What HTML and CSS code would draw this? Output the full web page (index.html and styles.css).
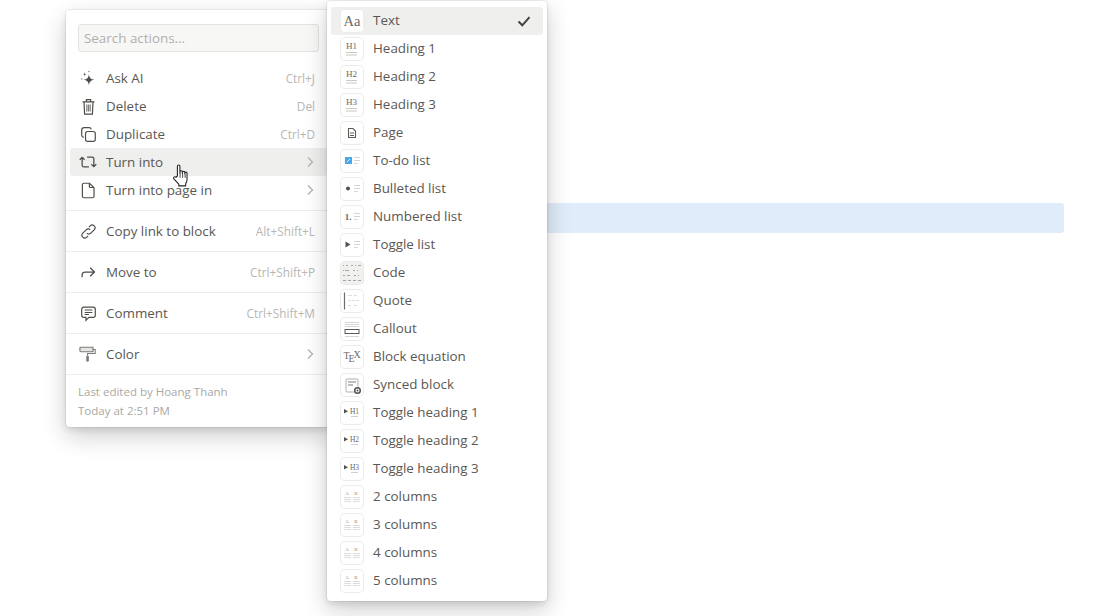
FILE: index.html
```html
<!DOCTYPE html>
<html lang="en">
<head>
<meta charset="utf-8">
<title>Block menu</title>
<link rel="stylesheet" href="styles.css">
</head>
<body>
<svg class="defs" width="0" height="0">
  <symbol id="chev" viewBox="0 0 10 12"><path d="M3 1.500 7.500 6 3 10.500" fill="none" stroke="#b4b3b0" stroke-width="1.300"/></symbol>
  <symbol id="lines" viewBox="0 0 24 24"><path d="M14 8.500h6M14 11.500h6M14 14.500h4" fill="none" stroke="#d6d5d3" stroke-width="1"/></symbol>
  <symbol id="collines" viewBox="0 0 24 24"><path d="M4 12.500h7M4 14.500h7M4 16.500h7M13 12.500h7M13 14.500h7M13 16.500h7" fill="none" stroke="#dedddb" stroke-width="1"/></symbol>
  <symbol id="hlines" viewBox="0 0 24 24"><path d="M6 15.500h11M6 18h11" fill="none" stroke="#c9c8c6"/></symbol>
  <symbol id="tri" viewBox="0 0 24 24"><path d="M4 8v4.500l4-2.200z" fill="#55534e"/><path d="M11 15.500h7" fill="none" stroke="#cfcfcd"/></symbol>
</svg>
<main class="page">
  <div class="selected-block"></div>
</main>

<section class="menu menu-actions">
  <div class="search-wrap"><div class="search">Search actions...</div></div>
  <div class="group group-first">
    <div class="row">
      <svg class="act-ic" viewBox="0 0 20 20"><path d="M10.500 5c.6 4.200 2 5.800 6.500 6.500-4.500.7-5.900 2.300-6.500 6.500-.6-4.200-2-5.800-6.500-6.500 4.500-.7 5.900-2.300 6.500-6.500z" fill="#4f4d48"/><path d="M5.500 2.500c.3 1.700.8 2.200 2.500 2.500-1.700.3-2.200.8-2.500 2.500C5.200 5.800 4.700 5.300 3 5c1.700-.3 2.200-.8 2.500-2.500z" fill="#6f6e69"/><circle cx="10.500" cy="1.800" r=".9" fill="#8a8986"/><circle cx="2" cy="10.500" r=".9" fill="#8a8986"/></svg>
      <span class="label">Ask AI</span><span class="hint">Ctrl+J</span>
    </div>
    <div class="row">
      <svg class="act-ic" viewBox="0 0 20 20" fill="none" stroke="#4f4d48" stroke-width="1.400"><path d="M3 4.500h14M7.500 4.500V2h5v2.500M4.700 4.500l.7 14.500h9.200l.7-14.500"/><path d="M8 7.500v8.500M10 7.500v8.500M12 7.500v8.500" stroke="#7d7c78"/></svg>
      <span class="label">Delete</span><span class="hint">Del</span>
    </div>
    <div class="row">
      <svg class="act-ic" viewBox="0 0 20 20" fill="none" stroke="#4f4d48" stroke-width="1.400"><rect x="6.500" y="6.500" width="11.500" height="11.500" rx="2.500"/><path d="M4.500 13.300C3.300 13 2 12 2 10.800V5c0-1.700 1.300-3 3-3h5.800c1.200 0 2.200.8 2.500 2"/></svg>
      <span class="label">Duplicate</span><span class="hint">Ctrl+D</span>
    </div>
    <div class="row row-active">
      <svg class="act-ic act-wide" viewBox="0 0 20 20" fill="none" stroke="#4f4d48" stroke-width="1.400"><path d="M.8 7.500 3.500 4.800l2.700 2.700M3.500 5v8.500a2 2 0 0 0 2 2H11M19.200 12.500l-2.700 2.700-2.700-2.700M16.500 15V6.500a2 2 0 0 0-2-2H9"/></svg>
      <span class="label">Turn into</span><svg class="chev"><use href="#chev"/></svg>
    </div>
    <div class="row">
      <svg class="act-ic" viewBox="0 0 20 20" fill="none" stroke="#4f4d48" stroke-width="1.400"><path d="M4.500 1.500h6.700l5.300 5.300v10a1.700 1.700 0 0 1-1.700 1.700H4.500a1.700 1.700 0 0 1-1.700-1.700V3.200a1.700 1.700 0 0 1 1.700-1.700z"/><path d="M11 1.500v3.500a1.500 1.500 0 0 0 1.500 1.500h4"/></svg>
      <span class="label">Turn into page in</span><svg class="chev"><use href="#chev"/></svg>
    </div>
  </div>
  <div class="group">
    <div class="row">
      <svg class="act-ic" viewBox="0 0 20 20" fill="none" stroke="#4f4d48" stroke-width="1.400"><path d="M8 12a3.300 3.300 0 0 0 4.700 0l4-4a3.300 3.300 0 0 0-4.700-4.700l-1.500 1.500"/><path d="M12 8a3.300 3.300 0 0 0-4.700 0l-4 4A3.300 3.300 0 0 0 8 16.700l1.500-1.500"/></svg>
      <span class="label">Copy link to block</span><span class="hint">Alt+Shift+L</span>
    </div>
  </div>
  <div class="group">
    <div class="row">
      <svg class="act-ic" viewBox="0 0 20 20" fill="none" stroke="#4f4d48" stroke-width="1.500"><path d="M2.500 15.500V13a3.500 3.500 0 0 1 3.500-3.500h11M12 4.500l5 5-5 5"/></svg>
      <span class="label">Move to</span><span class="hint">Ctrl+Shift+P</span>
    </div>
  </div>
  <div class="group">
    <div class="row">
      <svg class="act-ic" viewBox="0 0 20 20" fill="none" stroke="#4f4d48" stroke-width="1.400"><path d="M4.500 2.500h11A2.500 2.500 0 0 1 18 5v7a2.500 2.500 0 0 1-2.500 2.500h-5L7 18v-3.500H4.500A2.500 2.500 0 0 1 2 12V5a2.500 2.500 0 0 1 2.500-2.500z"/><path d="M5.500 6h9M5.500 8.700h9M5.500 11.300h5" stroke-width="1.200"/></svg>
      <span class="label">Comment</span><span class="hint">Ctrl+Shift+M</span>
    </div>
  </div>
  <div class="group">
    <div class="row">
      <svg class="act-ic act-wide" viewBox="0 0 20 20" fill="none"><path d="M2 2.500h13.500v5H2a1 1 0 0 1-1-1v-3a1 1 0 0 1 1-1z" fill="#e6e5e3" stroke="#7d7c78" stroke-width="1.300"/><path d="M15.500 5h2.500v4.500H9.500V12" stroke="#7d7c78" stroke-width="1.200"/><rect x="8" y="12" width="3" height="6.500" rx="1.200" fill="#7d7c78"/></svg>
      <span class="label">Color</span><svg class="chev"><use href="#chev"/></svg>
    </div>
  </div>
  <footer class="meta">
    <div>Last edited by Hoang Thanh</div>
    <div>Today at 2:51 PM</div>
  </footer>
</section>

<section class="menu menu-types">
  <div class="trow trow-active">
    <svg class="tic" viewBox="0 0 24 24"><text x="12" y="16.500" class="ic-aa">Aa</text></svg>
    <span class="label">Text</span>
    <svg class="check" viewBox="0 0 14 14"><path d="M1.500 7.500 5.300 11.300 12.500 3.200" fill="none" stroke="#44423e" stroke-width="2"/></svg>
  </div>
  <div class="trow"><svg class="tic" viewBox="0 0 24 24"><text x="11.500" y="12" class="ic-h">H1</text><use href="#hlines"/></svg><span class="label">Heading 1</span></div>
  <div class="trow"><svg class="tic" viewBox="0 0 24 24"><text x="11.500" y="12" class="ic-h">H2</text><use href="#hlines"/></svg><span class="label">Heading 2</span></div>
  <div class="trow"><svg class="tic" viewBox="0 0 24 24"><text x="11.500" y="12" class="ic-h">H3</text><use href="#hlines"/></svg><span class="label">Heading 3</span></div>
  <div class="trow"><svg class="tic" viewBox="0 0 24 24"><path d="M8.500 7.500h4.500l2.500 2.500v6.500h-7z" fill="none" stroke="#5c5b56" stroke-width="1.100"/><path d="M10 12h4M10 14.500h4" stroke="#5c5b56"/></svg><span class="label">Page</span></div>
  <div class="trow"><svg class="tic" viewBox="0 0 24 24"><rect x="5" y="8" width="7" height="7" fill="#4aa8e8"/><path d="M7 13l3-3" stroke="#fff" stroke-width=".8"/><use href="#lines"/></svg><span class="label">To-do list</span></div>
  <div class="trow"><svg class="tic" viewBox="0 0 24 24"><circle cx="8" cy="11.500" r="2" fill="#55534e"/><use href="#lines"/></svg><span class="label">Bulleted list</span></div>
  <div class="trow"><svg class="tic" viewBox="0 0 24 24"><text x="8" y="15" class="ic-num">1.</text><use href="#lines"/></svg><span class="label">Numbered list</span></div>
  <div class="trow"><svg class="tic" viewBox="0 0 24 24"><path d="M5.500 8.500v6l5-3z" fill="#55534e"/><use href="#lines"/></svg><span class="label">Toggle list</span></div>
  <div class="trow"><svg class="tic tic-code" viewBox="0 0 24 24"><path d="M3 4.500h1M6 4.500h2M11 4.500h2M15 4.500h1M18 4.500h3M3 9.500h1M5 9.500h4M13 9.500h2M17 9.500h1M3 14.500h2M7 14.500h3M14 14.500h2M18 14.500h1M3 19.500h3M8 19.500h3M13 19.500h3M18 19.500h3" fill="none" stroke="#a8a7a4"/></svg><span class="label">Code</span></div>
  <div class="trow"><svg class="tic" viewBox="0 0 24 24"><path d="M4.500 3.500v17" stroke="#6f6e69" stroke-width="1.200"/><path d="M8 6.500h4M14 6.500h3M8 11.500h3M12 11.500h3M16 11.500h3M8 16.500h3M14 16.500h3" fill="none" stroke="#dedddb"/></svg><span class="label">Quote</span></div>
  <div class="trow"><svg class="tic" viewBox="0 0 24 24"><path d="M5 5.500h14M5 7.500h14M5 9.500h14M5 19.500h14" stroke="#d6d5d3"/><rect x="5" y="12.500" width="14" height="4" fill="none" stroke="#5c5b56"/></svg><span class="label">Callout</span></div>
  <div class="trow"><svg class="tic" viewBox="0 0 24 24"><text x="6.500" y="14" class="ic-tex">T</text><text x="11.500" y="17" class="ic-tex">E</text><text x="17" y="13" class="ic-tex">X</text></svg><span class="label">Block equation</span></div>
  <div class="trow"><svg class="tic" viewBox="0 0 24 24"><path d="M18 13.500V7a1 1 0 0 0-1-1H7a1 1 0 0 0-1 1v11a1 1 0 0 0 1 1h7" fill="none" stroke="#b0afac"/><path d="M8 9h8M8 12h5" stroke="#7d7c78" stroke-width="1.200"/><circle cx="17.500" cy="17.500" r="2.800" fill="#fff" stroke="#55534e" stroke-width="1.500"/><circle cx="17.500" cy="17.500" r="1" fill="#55534e"/></svg><span class="label">Synced block</span></div>
  <div class="trow"><svg class="tic" viewBox="0 0 24 24"><use href="#tri"/><text x="14.500" y="12.500" class="ic-hs">H1</text></svg><span class="label">Toggle heading 1</span></div>
  <div class="trow"><svg class="tic" viewBox="0 0 24 24"><use href="#tri"/><text x="14.500" y="12.500" class="ic-hs">H2</text></svg><span class="label">Toggle heading 2</span></div>
  <div class="trow"><svg class="tic" viewBox="0 0 24 24"><use href="#tri"/><text x="14.500" y="12.500" class="ic-hs">H3</text></svg><span class="label">Toggle heading 3</span></div>
  <div class="trow"><svg class="tic" viewBox="0 0 24 24"><text x="7" y="9.500" class="ic-tiny">A</text><text x="16" y="9.500" class="ic-tiny">B</text><use href="#collines"/></svg><span class="label">2 columns</span></div>
  <div class="trow"><svg class="tic" viewBox="0 0 24 24"><text x="7" y="9.500" class="ic-tiny">A</text><text x="16" y="9.500" class="ic-tiny">B</text><use href="#collines"/></svg><span class="label">3 columns</span></div>
  <div class="trow"><svg class="tic" viewBox="0 0 24 24"><text x="7" y="9.500" class="ic-tiny">A</text><text x="16" y="9.500" class="ic-tiny">B</text><use href="#collines"/></svg><span class="label">4 columns</span></div>
  <div class="trow"><svg class="tic" viewBox="0 0 24 24"><text x="7" y="9.500" class="ic-tiny">A</text><text x="16" y="9.500" class="ic-tiny">B</text><use href="#collines"/></svg><span class="label">5 columns</span></div>
</section>

<svg class="hand" viewBox="0 0 20 28"><path d="M6 14V3.200a1.400 1.400 0 0 1 2.800 0V11l.1-1.500a1.300 1.300 0 0 1 2.600 0v1.800l.1-1.200a1.300 1.300 0 0 1 2.600 0v1.600l.1-.8a1.200 1.200 0 0 1 2.400 0V18c0 2-.8 3.500-1.500 4.500v2.500H7.500v-2L2.300 17.500c-1.600-1.800.6-3.600 2.200-2.100z" fill="#fff" stroke="#222" stroke-width="1.200" stroke-linejoin="round"/><path d="M9 11v5M11.800 11v5M14.600 12v4" stroke="#222" stroke-width=".9" fill="none"/></svg>
</body>
</html>
```
FILE: styles.css
```css
* { box-sizing: border-box; }
html, body { margin: 0; height: 100%; background: #fff; overflow: hidden; }
body {
  font-family: "Open Sans", "Noto Sans", sans-serif;
  font-size: 13.4px;
  color: #5a5853;
  position: relative;
}
.defs { position: absolute; }
.page { padding: 203px 37px 0 340px; }
.selected-block { height: 30px; background: #e0ecf9; border-radius: 3px; }

.menu {
  position: absolute;
  background: #fff;
  border-radius: 4px;
  box-shadow: rgba(15,15,15,.05) 0 0 0 1px, rgba(15,15,15,.1) 0 3px 6px, rgba(15,15,15,.2) 0 9px 24px;
}
.menu-actions { left: 66px; top: 10px; width: 265px; height: 417px; }
.menu-types { left: 327px; top: 1px; width: 220px; height: 600px; padding: 6px 4px; }

.search-wrap { padding: 14px 12px 12px; }
.search {
  height: 28px;
  line-height: 26px;
  padding: 0 5px;
  background: #f7f7f5;
  border: 1px solid #e3e2df;
  border-radius: 3px;
  color: #b1b0ad;
}
.group { padding: 6px 0; border-bottom: 1px solid #ededec; }
.group-first { padding-top: 0; }
.row {
  display: flex;
  align-items: center;
  height: 28px;
  margin: 0 4px;
  padding: 0 12px 0 10px;
  border-radius: 3px;
}
.row-active { background: #efefee; }
.act-ic { width: 17px; height: 17px; margin-right: 9px; flex: none; }
.act-wide { width: 18px; height: 18px; margin: 0 9px 0 -1px; }
.label { flex: 1; white-space: nowrap; }
.hint { font-size: 11.8px; color: #b8b7b4; white-space: nowrap; }
.chev { width: 10px; height: 12px; flex: none; }

.meta { padding: 7px 12px 0; font-size: 11.5px; line-height: 19px; color: #a9a8a5; }

.trow {
  display: flex;
  align-items: center;
  height: 28px;
  padding: 0 12px 0 9px;
  border-radius: 3px;
}
.trow .label { margin-bottom: 2px; }
.trow-active { background: #efefee; }
.tic {
  width: 24px;
  height: 24px;
  flex: none;
  margin-right: 9px;
  background: #fff;
  border-radius: 5px;
  box-shadow: inset 0 0 0 1px #ebebe9;
}
.tic-code { background: #f1f1ef; }
.check { width: 14px; height: 14px; flex: none; margin-bottom: 1px; }

svg text { font-family: "Liberation Serif", serif; text-anchor: middle; fill: #6b6a66; }
.ic-aa { font-size: 14.5px; }
.ic-h { font-size: 9px; }
.ic-hs { font-size: 7.5px; }
.ic-num { font-size: 9px; font-weight: bold; }
.ic-tex { font-size: 10px; }
.ic-tiny { font-size: 5px; fill: #8a8986; }

.hand { position: absolute; left: 172px; top: 163px; width: 18px; height: 26px; }
```
